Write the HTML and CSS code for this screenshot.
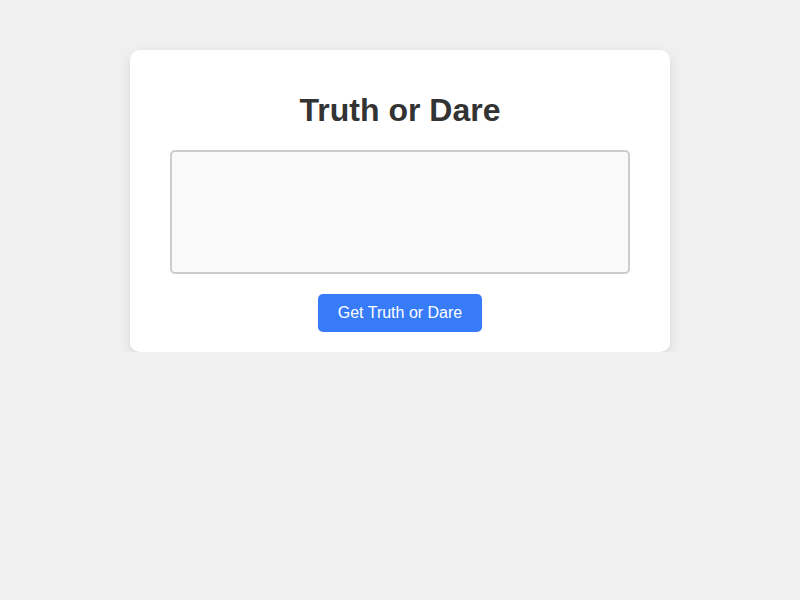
FILE: index.html
```html
<!DOCTYPE html>
<html>
<head>
<meta charset="utf-8">
<link rel="stylesheet" href="styles.css">
</head>
<body>
<div class="card">
  <h1 class="title">Truth or Dare</h1>
  <div class="result"></div>
  <button class="btn">Get Truth or Dare</button>
</div>
</body>
</html>
```
FILE: styles.css
```css
html, body {
  margin: 0;
  padding: 0;
  background: #f0f0f0;
  font-family: "Liberation Sans", Arial, sans-serif;
}
body {
  padding-top: 50px;
}
.card {
  width: 540px;
  box-sizing: border-box;
  margin: 0 auto;
  background: #fff;
  border-radius: 10px;
  box-shadow: 0 4px 12px rgba(0,0,0,0.1);
  padding: 42px 40px 20px;
  display: flex;
  flex-direction: column;
  align-items: center;
}
.title {
  margin: 0 0 21px;
  font-size: 32px;
  line-height: 37px;
  font-weight: bold;
  color: #333;
}
.result {
  align-self: stretch;
  height: 124px;
  box-sizing: border-box;
  border: 2px solid #ccc;
  border-radius: 5px;
  background: #f9f9f9;
  margin-bottom: 20px;
}
.btn {
  width: 164px;
  height: 38px;
  border: none;
  border-radius: 5px;
  background: #377bf8;
  color: #fff;
  font-family: "Liberation Sans", Arial, sans-serif;
  font-size: 16px;
  padding: 0;
}
```
